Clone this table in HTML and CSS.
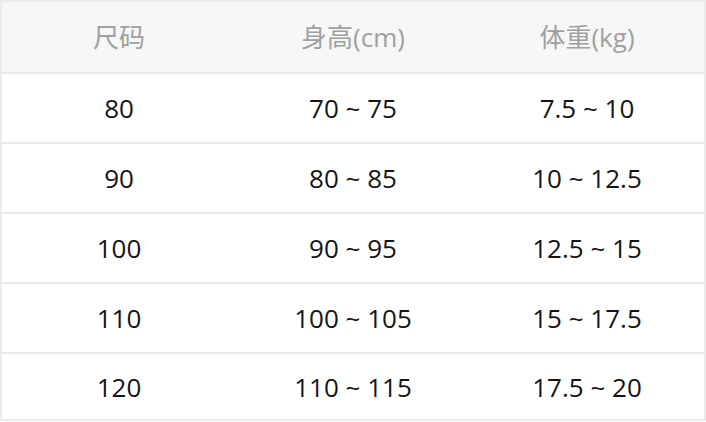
FILE: index.html
```html
<!DOCTYPE html>
<html lang="zh">
<head>
<meta charset="utf-8">
<link rel="stylesheet" href="styles.css">
</head>
<body>
<div class="size-table">
  <div class="row head">
    <div class="cell">尺码</div>
    <div class="cell">身高(cm)</div>
    <div class="cell">体重(kg)</div>
  </div>
  <div class="row">
    <div class="cell">80</div>
    <div class="cell">70 ~ 75</div>
    <div class="cell">7.5 ~ 10</div>
  </div>
  <div class="row">
    <div class="cell">90</div>
    <div class="cell">80 ~ 85</div>
    <div class="cell">10 ~ 12.5</div>
  </div>
  <div class="row">
    <div class="cell">100</div>
    <div class="cell">90 ~ 95</div>
    <div class="cell">12.5 ~ 15</div>
  </div>
  <div class="row">
    <div class="cell">110</div>
    <div class="cell">100 ~ 105</div>
    <div class="cell">15 ~ 17.5</div>
  </div>
  <div class="row last">
    <div class="cell">120</div>
    <div class="cell">110 ~ 115</div>
    <div class="cell">17.5 ~ 20</div>
  </div>
</div>
</body>
</html>
```
FILE: styles.css
```css
* { box-sizing: border-box; }
html, body {
  margin: 0;
  padding: 0;
  background: #ffffff;
}
body {
  width: 706px;
  height: 422px;
  font-family: "Open Sans", "Noto Sans", "Noto Sans CJK SC", sans-serif;
  font-size: 26px;
  font-weight: 390;
  color: #141414;
}
.size-table {
  width: 706px;
  height: 421px;
  border: 2px solid #ebebeb;
  display: flex;
  flex-direction: column;
}
.row {
  display: grid;
  grid-template-columns: 1fr 1fr 1fr;
  height: 70px;
  border-bottom: 2px solid #ebebeb;
}
.row.head {
  height: 72px;
  background: #f7f7f7;
  color: #a0a0a0;
  font-weight: 400;
}
.row.last {
  height: 65px;
  border-bottom: none;
}
.cell {
  display: flex;
  align-items: center;
  justify-content: center;
  line-height: 1;
  white-space: nowrap;
}
```
